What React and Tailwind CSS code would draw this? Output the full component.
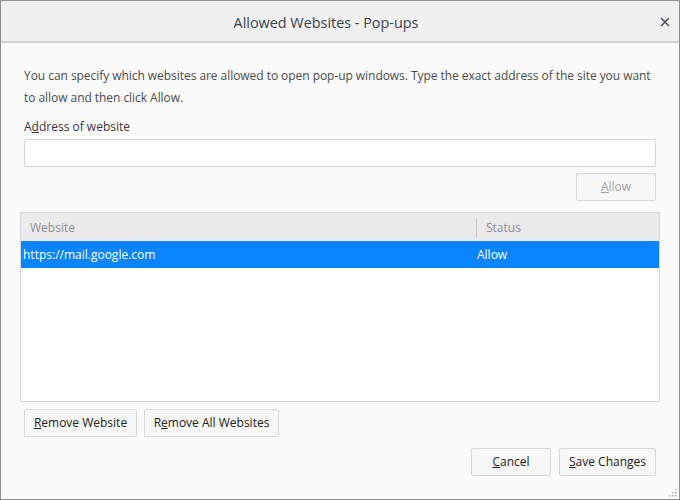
import React from "react";

const font = { fontFamily: '"Open Sans", "Noto Sans", sans-serif' };

const Btn = ({ children, className = "" }) => (
  <button
    className={`h-[28px] border border-[#d7d7db] bg-[#f7f7f7] rounded-[2px] text-[12px] text-[#202020] flex items-center justify-center ${className}`}
  >
    {children}
  </button>
);

const App = () => {
  return (
    <div
      className="w-[680px] h-[500px] border border-[#8d8d8d] bg-[#fbfbfb] flex flex-col relative overflow-hidden"
      style={font}
    >
      <div className="h-[42px] bg-[#f0f0f0] border-b-2 border-[#d5d5d5] flex items-center justify-center relative shrink-0 pr-[28px]">
        <span className="text-[14.4px] text-[#3b4351] mt-[3px]">Allowed Websites - Pop-ups</span>
        <svg
          className="absolute right-[9px] top-[16px]"
          width="10"
          height="10"
          viewBox="0 0 10 10"
        >
          <path d="M1 1 L9 9 M9 1 L1 9" stroke="#4a5563" strokeWidth="1.6" />
        </svg>
      </div>

      <div className="flex-1 flex flex-col px-[23px] pt-[22px] pb-[22px] text-[#4a4a4f]">
        <p className="text-[12px] leading-[22px] tracking-[-0.05px]">
          You can specify which websites are allowed to open pop-up windows. Type the exact address of the site you want
          to allow and then click Allow.
        </p>
        <label className="text-[12px] leading-[20px] mt-[8px] text-[#38383d]">
          A<span className="underline">d</span>dress of website
        </label>
        <input className="mt-[2px] h-[28px] bg-white border border-[#d4d4d6] rounded-[2px] outline-none" />
        <div className="flex justify-end mt-[6px]">
          <Btn className="w-[80px] text-[#a2a2a6]">
            <span className="underline">A</span>llow
          </Btn>
        </div>

        <div className="-mx-[4px] mt-[11px] h-[190px] border border-[#d7d7db] bg-white flex flex-col">
          <div className="h-[28px] bg-[#ebebeb] flex items-center text-[12px] text-[#8e8e93] shrink-0 pt-[1px]">
            <div className="w-[455px] pl-[9px]">Website</div>
            <div className="w-px h-[20px] bg-[#c4c4c4]" />
            <div className="pl-[9px]">Status</div>
          </div>
          <div className="h-[27px] bg-[#0a84ff] flex items-center text-[12px] text-white">
            <div className="w-[455px] pl-[2px]">https://mail.google.com</div>
            <div className="pl-[1px]">Allow</div>
          </div>
        </div>

        <div className="flex gap-[7px] mt-[7px]">
          <Btn className="w-[113px]">
            <span className="underline">R</span>emove Website
          </Btn>
          <Btn className="w-[135px]">
            R<span className="underline">e</span>move All Websites
          </Btn>
        </div>

        <div className="flex justify-end gap-[8px] mt-[11px]">
          <Btn className="w-[80px]">
            <span className="underline">C</span>ancel
          </Btn>
          <Btn className="w-[97px]">
            <span className="underline">S</span>ave Changes
          </Btn>
        </div>
      </div>

      <svg className="absolute right-[2px] bottom-[2px]" width="9" height="9" viewBox="0 0 9 9">
        <g fill="#b0b0b0">
          <rect x="7" y="1" width="1.5" height="1.5" />
          <rect x="4" y="4" width="1.5" height="1.5" />
          <rect x="7" y="4" width="1.5" height="1.5" />
          <rect x="1" y="7" width="1.5" height="1.5" />
          <rect x="4" y="7" width="1.5" height="1.5" />
          <rect x="7" y="7" width="1.5" height="1.5" />
        </g>
      </svg>
    </div>
  );
};

export default App;
